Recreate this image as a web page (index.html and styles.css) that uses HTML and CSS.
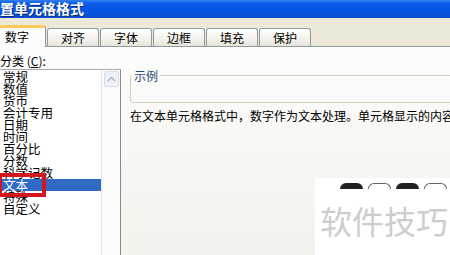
FILE: index.html
```html
<!DOCTYPE html>
<html>
<head>
<meta charset="utf-8">
<link rel="stylesheet" href="styles.css">
</head>
<body>
<div class="title"><span>置单元格格式</span></div>
<div class="tabs">
  <div class="tab active">数字</div>
  <div class="tab">对齐</div>
  <div class="tab">字体</div>
  <div class="tab">边框</div>
  <div class="tab">填充</div>
  <div class="tab">保护</div>
</div>
<div class="panel">
  <div class="left">
    <div class="label">分类 (<u>C</u>):</div>
    <div class="listbox">
      <ul class="items">
        <li>常规</li>
        <li>数值</li>
        <li>货币</li>
        <li>会计专用</li>
        <li>日期</li>
        <li>时间</li>
        <li>百分比</li>
        <li>分数</li>
        <li>科学记数</li>
        <li class="sel">文本</li>
        <li>特殊</li>
        <li>自定义</li>
      </ul>
      <div class="scroll">
        <div class="up"><svg width="9" height="6" viewBox="0 0 9 6"><path d="M1 5 L4.5 1.5 L8 5" fill="none" stroke="#b3bccb" stroke-width="1.6"/></svg></div>
      </div>
    </div>
  </div>
  <div class="right">
    <fieldset class="sample"><legend>示例</legend></fieldset>
    <p class="desc">在文本单元格格式中，数字作为文本处理。单元格显示的内容</p>
  </div>
</div>
<div class="mark">
  <div class="pills">
    <span class="pill dark"></span>
    <span class="pill light"></span>
    <span class="pill dark"></span>
    <span class="pill light"></span>
  </div>
  <div class="mark-text">软件技巧</div>
</div>
<div class="redbox"></div>
</body>
</html>
```

FILE: styles.css
```css
* { box-sizing: border-box; }
html, body { margin: 0; padding: 0; }
body {
  width: 450px;
  height: 255px;
  overflow: hidden;
  position: relative;
  font-family: "Noto Sans CJK SC", "Liberation Sans", sans-serif;
  font-size: 12px;
  color: #000;
  background: #ece9d8;
}
.title {
  height: 18px;
  background: linear-gradient(#2f7ff2 0%, #0a5ae6 22%, #0553e2 70%, #0a4ccf 100%);
  color: #fff;
  font-weight: bold;
  font-size: 14px;
  line-height: 17px;
  white-space: nowrap;
  text-shadow: 1px 1px 0 #0b2a78;
}
.tabs {
  height: 28px;
  display: flex;
  align-items: flex-end;
  background: #ece9d8;
}
.tab {
  width: 52px;
  height: 18px;
  margin-left: 1px;
  border: 1px solid #919b9c;
  border-bottom: none;
  border-radius: 3px 3px 0 0;
  background: linear-gradient(#ffffff, #f3f2ec 60%, #e6e4da);
  text-align: center;
  line-height: 17px;
  font-size: 12px;
}
.tab.active {
  width: 47px;
  height: 22px;
  margin-left: -1px;
  margin-bottom: -1px;
  position: relative;
  z-index: 1;
  background: #fcfcfe;
  border-top: 3px solid #fdc95a;
  text-align: left;
  padding-left: 5px;
  line-height: 18px;
}
.panel {
  height: 209px;
  overflow: hidden;
  border-top: 1px solid #919b9c;
  background: linear-gradient(#fdfdfd, #f8f7f3 50%, #f3f2ed);
  display: flex;
}
.left {
  width: 121px;
  padding-top: 7px;
}
.label {
  line-height: 14px;
  margin-bottom: 1px;
  white-space: nowrap;
}
.listbox {
  margin-left: -2px;
  width: 123px;
  height: 186px;
  border: 1px solid #a5acb2;
  border-bottom: none;
  border-right-color: #8a8a8a;
  background: #fff;
  display: flex;
}
.items {
  list-style: none;
  margin: 0;
  padding: 1px 0 0 0;
  width: 102px;
  font-size: 12.5px;
  line-height: 12px;
}
.items li {
  height: 12px;
  padding-left: 4px;
  white-space: nowrap;
}
.items li.sel {
  background: #316ac5;
  color: #fff;
}
.scroll {
  width: 19px;
  border-left: 1px solid #e6e6e6;
  background: #fbfbfb;
}
.up {
  width: 15px;
  height: 16px;
  margin: 1px 0 0 2px;
  border: 1px solid #d9dee8;
  border-radius: 2px;
  background: #eef1f6;
  display: flex;
  align-items: center;
  justify-content: center;
}
.right {
  flex: 1;
  padding-left: 9px;
  padding-top: 7px;
  min-width: 0;
}
.sample {
  margin: 15px -10px 0 0;
  padding: 0;
  height: 34px;
  border: 1px solid #d0d0bf;
  border-radius: 3px;
}
.sample legend {
  padding: 0 2px;
  margin-left: 1px;
  line-height: 13px;
  font-size: 12px;
  color: #1b4a78;
}
.desc {
  margin: 6px 0 0 0;
  line-height: 14px;
  white-space: nowrap;
  overflow: hidden;
}
.mark {
  position: absolute;
  left: 315px;
  top: 178px;
  width: 135px;
  height: 77px;
  background: #fff;
  padding: 5px 0 0 5px;
}
.pills {
  display: flex;
  gap: 5px;
  margin-left: 20px;
}
.pill {
  width: 23px;
  height: 6px;
  border-radius: 6px 6px 0 0;
}
.pill.dark { background: #222; }
.pill.light { border: 1px solid #666; border-bottom: none; background: #fff; }
.mark-text {
  margin-top: 15px;
  font-size: 32px;
  line-height: 32px;
  color: #cdcdcd;
  white-space: nowrap;
}
.redbox {
  position: absolute;
  left: -2px;
  top: 173px;
  width: 48px;
  height: 24px;
  border: 4px solid #d2151f;
}
```
